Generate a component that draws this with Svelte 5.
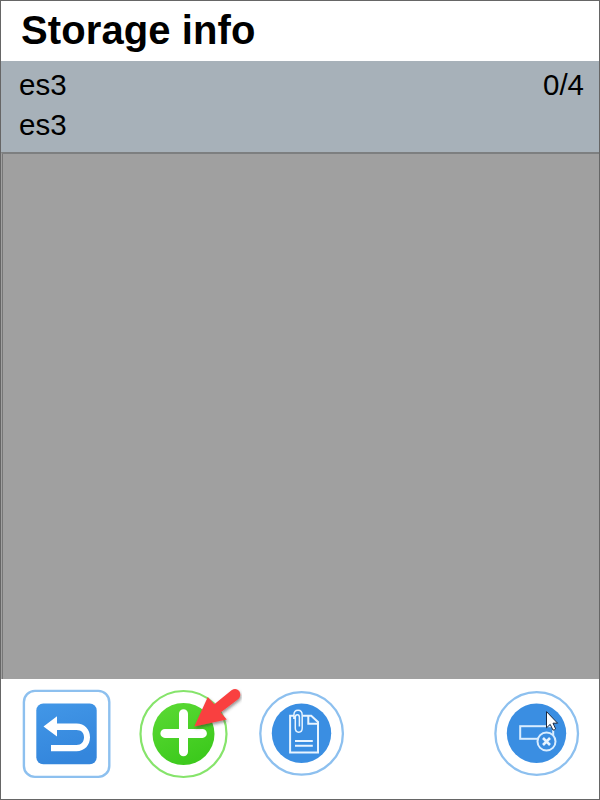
<script>
  const storage = { name: 'es3', label: 'es3', used: 0, capacity: 4 };
</script>

<div class="screen">
  <header><h1>Storage info</h1></header>
  <section class="summary">
    <div class="row"><span>{storage.name}</span><span>{storage.used}/{storage.capacity}</span></div>
    <div class="row"><span>{storage.label}</span></div>
  </section>
  <main></main>
  <footer>
    <button class="back" aria-label="Back">
      <svg width="90" height="90" viewBox="22 689 90 90">
        <defs>
          <linearGradient id="blue" x1="0" y1="0" x2="0.3" y2="1">
            <stop offset="0" stop-color="#4297e7" /><stop offset="1" stop-color="#3486dc" />
          </linearGradient>
        </defs>
        <rect x="23.9" y="690.9" width="85.4" height="86" rx="11" fill="#fff" stroke="#8dc0ef" stroke-width="2.4" />
        <rect x="36.3" y="703.5" width="60.4" height="60.8" rx="7" fill="url(#blue)" />
        <path d="M43.5 726.4 57 716.3V723.6H76.5C84.7 723.6 90 729.4 90 737.3S84.7 751.2 76.5 751.2H51V745H76.5C81.4 745 84 741.8 84 737.3S81.4 730 76.5 730H57V736.5Z" fill="#fff" />
      </svg>
    </button>
    <button class="add" aria-label="Add">
      <svg width="104" height="92" viewBox="138 687 104 92">
        <defs>
          <linearGradient id="green" x1="0" y1="0" x2="0.5" y2="1">
            <stop offset="0" stop-color="#5cda35" /><stop offset="1" stop-color="#3dca1d" />
          </linearGradient>
          <filter id="shadow" x="-20%" y="-20%" width="150%" height="150%">
            <feDropShadow dx="1" dy="2" stdDeviation="1.4" flood-color="#333" flood-opacity="0.5" />
          </filter>
        </defs>
        <circle cx="183.5" cy="734" r="43" fill="#fff" stroke="#86e46b" stroke-width="2.2" />
        <circle cx="183.5" cy="734" r="31" fill="url(#green)" />
        <path d="M183.5 713.8V751.8M164.9 733.4H202.4" fill="none" stroke="#fff" stroke-width="9" stroke-linecap="round" />
        <path d="M194.3 726.6 207.8 697 214.3 704.2 231.5 690.2Q235.8 687.2 239.2 691Q241.8 695.4 238.4 699L220.6 712.6 226.8 719.6Z" fill="#f94141" filter="url(#shadow)" />
      </svg>
    </button>
    <button class="document" aria-label="Attached document">
      <svg width="86" height="86" viewBox="259 690 86 86">
        <circle cx="301.6" cy="733.4" r="41.3" fill="#fff" stroke="#8dc0ef" stroke-width="2.3" />
        <circle cx="301.5" cy="733.3" r="29.7" fill="#3a8ee2" />
        <g fill="none" stroke="#e8f4ff" stroke-width="2">
          <path d="M294 715.7H290.1V752.4H318V722L311.2 715.7H303" />
          <path d="M308.3 715.8V723.7H317.8" />
          <path d="M295 741H312.8M295 745.8H312.8" />
          <path d="M293.9 719V715.2C293.9 708.7 302.2 708.7 302.2 715.2V728C302.2 733.5 295.3 733.5 295.3 728V717.3C295.3 713.8 299.4 713.8 299.4 717.3V726.5" stroke-width="1.5" />
        </g>
      </svg>
    </button>
    <button class="remove" aria-label="Remove storage">
      <svg width="86" height="86" viewBox="494 690 86 86">
        <circle cx="536.7" cy="733.5" r="41.3" fill="#fff" stroke="#8dc0ef" stroke-width="2.3" />
        <circle cx="536.5" cy="733.3" r="29.7" fill="#3a8ee2" />
        <rect x="520.2" y="726.2" width="33" height="12.6" fill="none" stroke="#d9edff" stroke-width="2" />
        <circle cx="546.5" cy="741.5" r="9" fill="#398ce0" stroke="#d9edff" stroke-width="2" />
        <path d="M543 738 550 745M550 738 543 745" stroke="#e8f4ff" stroke-width="2.6" />
        <path d="M546.5 711.6V727.8L550.2 724.4 553 730.1Q554.6 730.1 555.6 728.8L553 723.2H557.6Z" fill="#fff" stroke="#17273f" stroke-width="1" stroke-linejoin="round" />
      </svg>
    </button>
  </footer>
</div>

<style>
  .screen {
    box-sizing: border-box;
    width: 600px;
    height: 800px;
    border: 1px solid #666;
    display: flex;
    flex-direction: column;
    background: #fff;
    color: #000;
    font-family: "Liberation Sans", Arial, sans-serif;
  }
  header {
    height: 60px;
    padding-left: 20px;
    box-sizing: border-box;
  }
  h1 {
    margin: 0;
    font-size: 40px;
    line-height: 58px;
    letter-spacing: 0.1px;
  }
  .summary {
    box-sizing: border-box;
    height: 91px;
    padding: 4px 15px 0 18px;
    background: #a7b1b9;
    font-size: 29.5px;
  }
  .row {
    height: 40px;
    line-height: 40px;
    display: flex;
    justify-content: space-between;
  }
  main {
    flex: 1;
    background: #a0a0a0;
    border-top: 2px solid #7d7f80;
    border-left: 1px solid #a0a0a0;
    box-shadow: inset 1px 0 #777;
  }
  footer {
    box-sizing: border-box;
    height: 120px;
    padding: 8px 19px 0 21px;
    display: flex;
    align-items: flex-start;
  }
  button {
    padding: 0;
    border: 0;
    background: none;
  }
  svg { display: block; }
  .back { margin-top: 2px; }
  .add { margin-left: 26px; }
  .document { margin: 3px 0 0 17px; }
  .remove { margin: 3px 0 0 auto; }
</style>
